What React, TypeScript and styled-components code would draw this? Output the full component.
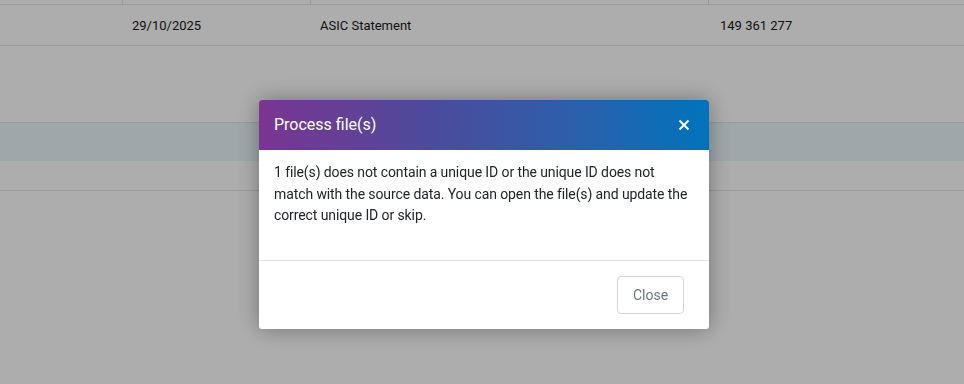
import React from "react";
import styled, { createGlobalStyle } from "styled-components";

const GlobalStyle = createGlobalStyle`
  html, body {
    margin: 0;
    padding: 0;
    background: #ffffff;
    font-family: Roboto, "Noto Sans", Arial, sans-serif;
    color: #212529;
  }
  * { box-sizing: border-box; }
`;

const Page = styled.div`
  width: 964px;
  height: 384px;
  overflow: hidden;
  background: #ffffff;
`;

const Row = styled.div<{ $height: number; $bg?: string; $borderBottom?: boolean; $borderTop?: boolean }>`
  display: grid;
  grid-template-columns: 122px 188px 398px 1fr;
  height: ${(p) => p.$height}px;
  background: ${(p) => p.$bg || "transparent"};
  border-bottom: ${(p) => (p.$borderBottom ? "1px solid #e3e3e3" : "none")};
  border-top: ${(p) => (p.$borderTop ? "1px solid #e3e3e3" : "none")};
`;

const HeadCell = styled.div<{ $divider?: boolean }>`
  border-left: ${(p) => (p.$divider ? "1px solid #e3e3e3" : "none")};
`;

const Cell = styled.div<{ $pad?: number }>`
  display: flex;
  align-items: center;
  padding-left: ${(p) => p.$pad ?? 10}px;
  font-size: 13px;
  color: #1a1a1a;
`;

const Spacer = styled.div<{ $h: number }>`
  height: ${(p) => p.$h}px;
`;

const Overlay = styled.div`
  position: fixed;
  inset: 0;
  background: rgba(0, 0, 0, 0.32);
  display: flex;
  justify-content: center;
  align-items: flex-start;
  padding-top: 100px;
  padding-left: 4px;
`;

const Modal = styled.div`
  width: 450px;
  background: #ffffff;
  border-radius: 3px;
  box-shadow: 0 0 22px rgba(0, 0, 0, 0.35);
  overflow: hidden;
`;

const Header = styled.div`
  height: 50px;
  display: flex;
  align-items: center;
  justify-content: space-between;
  padding: 0 17px 0 15px;
  background: linear-gradient(90deg, #7b3591 0%, #4a4c9c 40%, #2c5fab 70%, #0073bd 100%);
`;

const Title = styled.h5`
  margin: 0;
  font-size: 16px;
  font-weight: 400;
  color: #ffffff;
  line-height: 1;
`;

const CloseIcon = styled.button`
  border: none;
  background: transparent;
  padding: 0;
  width: 16px;
  height: 16px;
  display: flex;
  align-items: center;
  justify-content: center;
  cursor: pointer;
`;

const Body = styled.div`
  padding: 12px 15px 33px 15px;
  font-size: 14px;
  letter-spacing: -0.1px;
  line-height: 21.5px;
  color: #212529;
  border-bottom: 1px solid #dee2e6;
`;

const Footer = styled.div`
  display: flex;
  justify-content: flex-end;
  padding: 15px 25px 15px 15px;
`;

const Button = styled.button`
  width: 67px;
  height: 38px;
  border: 1px solid #d3d6da;
  border-radius: 4px;
  background: #ffffff;
  color: #6c757d;
  font-family: Roboto, "Noto Sans", Arial, sans-serif;
  font-size: 14px;
  cursor: pointer;
`;

export default function App() {
  return (
    <>
      <GlobalStyle />
      <Page>
        <Row $height={5} $borderBottom>
          <HeadCell />
          <HeadCell $divider />
          <HeadCell $divider />
          <HeadCell $divider />
        </Row>
        <Row $height={41} $borderBottom>
          <Cell />
          <Cell>29/10/2025</Cell>
          <Cell>ASIC Statement</Cell>
          <Cell $pad={12}>149 361 277</Cell>
        </Row>
        <Spacer $h={76} />
        <Row $height={39} $bg="#ebf7fb" $borderTop />
        <Row $height={30} $borderBottom />
      </Page>
      <Overlay>
        <Modal role="dialog">
          <Header>
            <Title>Process file(s)</Title>
            <CloseIcon aria-label="Close">
              <svg width="12" height="12" viewBox="0 0 12 12">
                <path d="M1.5 1.5 L10.5 10.5 M10.5 1.5 L1.5 10.5" stroke="#ffffff" strokeWidth="1.8" strokeLinecap="butt" />
              </svg>
            </CloseIcon>
          </Header>
          <Body>
            1 file(s) does not contain a unique ID or the unique ID does not match with the source
            data. You can open the file(s) and update the correct unique ID or skip.
          </Body>
          <Footer>
            <Button>Close</Button>
          </Footer>
        </Modal>
      </Overlay>
    </>
  );
}
